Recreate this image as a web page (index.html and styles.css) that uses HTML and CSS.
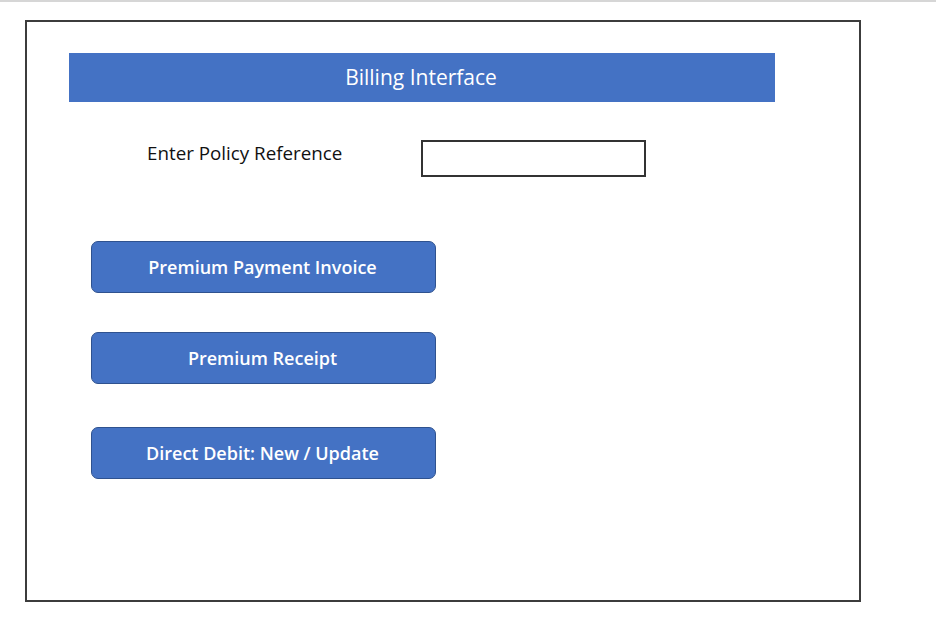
FILE: index.html
```html
<!DOCTYPE html>
<html lang="en">
<head>
<meta charset="utf-8">
<title>Billing Interface</title>
<link rel="stylesheet" href="styles.css">
</head>
<body>
<div class="topline"></div>
<div class="frame">
  <div class="header">Billing Interface</div>
  <div class="row">
    <label class="label" for="policy">Enter Policy Reference</label>
    <input class="input" id="policy" type="text">
  </div>
  <div class="buttons">
    <button class="btn btn-1">Premium Payment Invoice</button>
    <button class="btn btn-2">Premium Receipt</button>
    <button class="btn btn-3">Direct Debit: New / Update</button>
  </div>
</div>
</body>
</html>
```
FILE: styles.css
```css
html, body {
  margin: 0;
  padding: 0;
  background: #ffffff;
}
body {
  font-family: "Open Sans", "Noto Sans", sans-serif;
  width: 936px;
  height: 626px;
  overflow: hidden;
}
.topline {
  height: 2px;
  background: #d6d6d6;
}
.frame {
  box-sizing: border-box;
  margin: 18px 0 0 25px;
  width: 836px;
  height: 582px;
  border: 2px solid #3c3c3c;
  padding: 31px 0 0 42px;
  display: flex;
  flex-direction: column;
}
.header {
  width: 706px;
  height: 49px;
  background: #4472c4;
  color: #ffffff;
  font-size: 21px;
  display: flex;
  align-items: center;
  justify-content: center;
  padding: 0 2px 1px 0;
  box-sizing: border-box;
}
.row {
  display: flex;
  align-items: flex-start;
  margin-top: 38px;
}
.label {
  margin-left: 78px;
  width: 274px;
  font-size: 18.8px;
  color: #111111;
  line-height: 24px;
  margin-top: 1px;
}
.input {
  box-sizing: border-box;
  width: 225px;
  height: 37px;
  border: 2px solid #333333;
  margin: 0;
  padding: 0;
  background: #fff;
  outline: none;
}
.buttons {
  display: flex;
  flex-direction: column;
  margin-left: 22px;
  margin-top: 64px;
}
.btn {
  box-sizing: border-box;
  width: 345px;
  height: 52px;
  background: #4472c4;
  border: 1px solid #2f528f;
  border-radius: 7px;
  color: #ffffff;
  font-family: "Open Sans", "Noto Sans", sans-serif;
  font-size: 18px;
  font-weight: 600;
  padding: 0 2px 1px 0;
  margin: 0;
}
.btn-2 { margin-top: 39px; }
.btn-3 { margin-top: 43px; }
```
